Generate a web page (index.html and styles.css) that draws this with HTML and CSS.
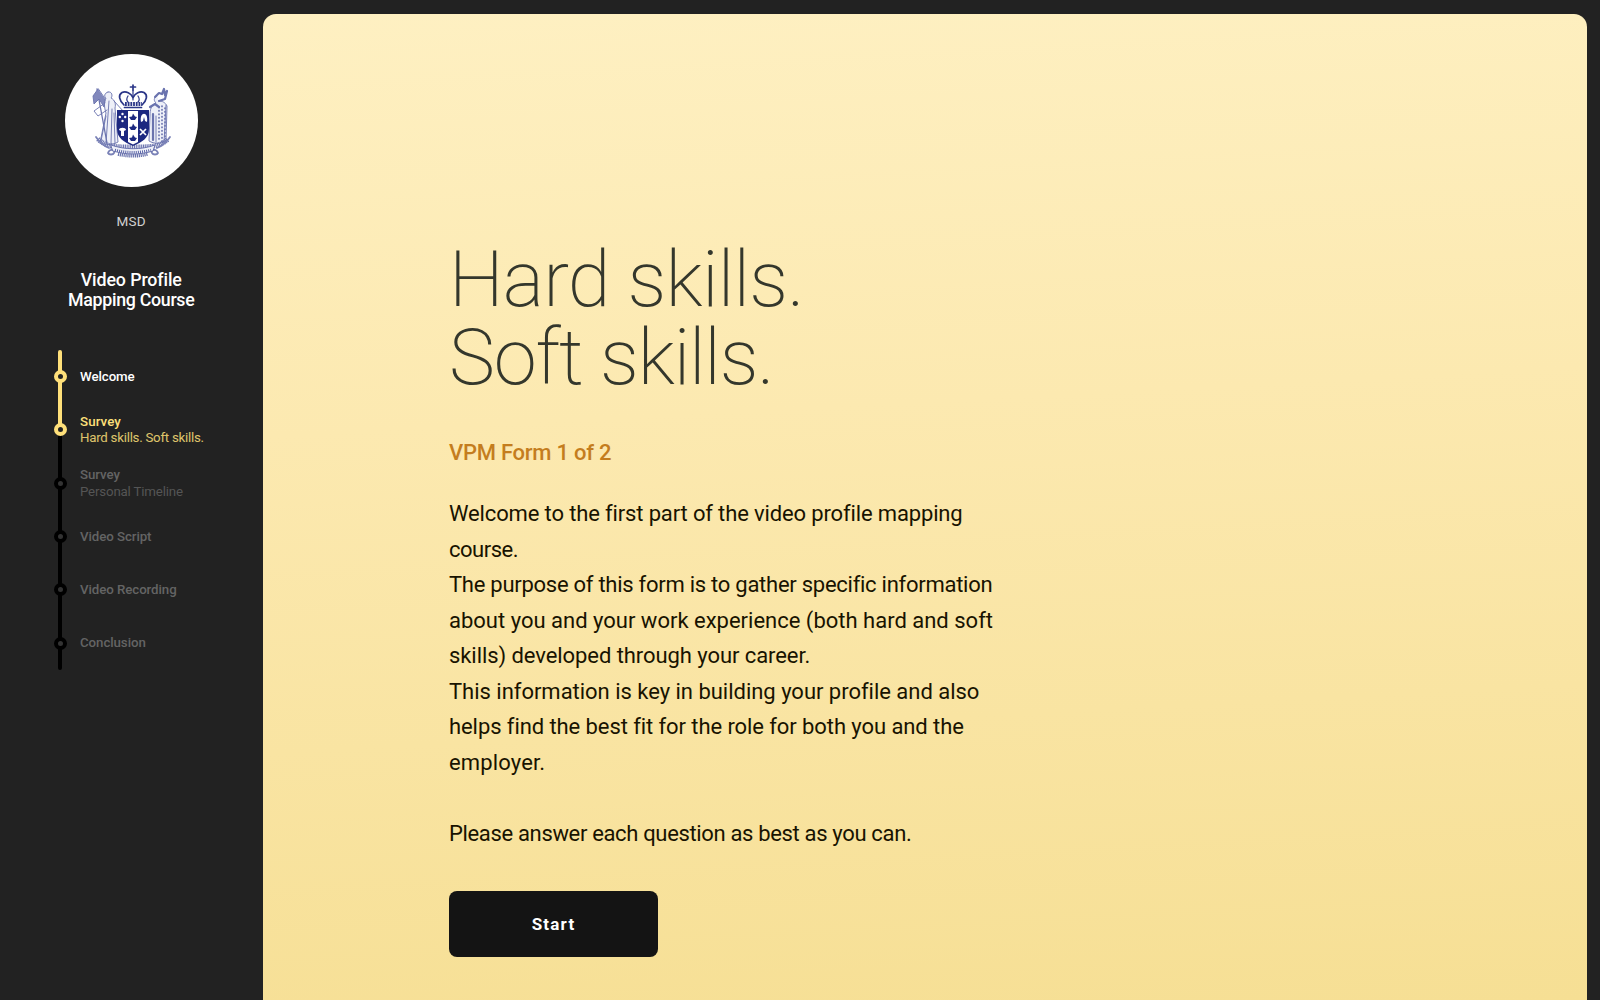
FILE: index.html
```html
<!DOCTYPE html>
<html lang="en">
<head>
<meta charset="utf-8">
<title>Video Profile Mapping Course</title>
<link rel="stylesheet" href="styles.css">
</head>
<body>
<div class="app">
  <aside class="sidebar">
    <div class="logo">
      <svg viewBox="88 78 86 82" width="86" height="82" aria-hidden="true">
        <g fill="none" stroke="#2b3688" stroke-linecap="round" stroke-linejoin="round">
          <!-- crown -->
          <path stroke-width="1.700" d="M133 84v6M130.500 86h5M124.500 106.500h17M124 104c-5-5-6-10-2-12.500 4-2 9 1 11 5 2-4 7-7 11-5 4 2.500 3 7.500-2 12.500"/>
          <path stroke-width="1.200" d="M133 91v8M128 95c-2 3-1 5 0 6M138 95c2 3 1 5 0 6"/>
          <path stroke-width="4" stroke-dasharray="1.800 .9" stroke-linecap="butt" d="M125 103h17"/>
          <!-- left supporter -->
          <g stroke="#6a73ae" stroke-width=".9">
            <path fill="#eef0f8" d="M108 91c4-1 5 4 3 6 4 2 5 6 4 10l3 34c-5 3-12 3-18 1l6-30c-2-6-2-11 0-15-2-1-2-5 2-6"/>
            <path d="M109 100l-3 42M112 108l-1 35M106 115l-5 25M114 112l1 30M114 100l10 11M105 102l-11 8 4 5 9-6"/>
            <path stroke-width="1.300" d="M97 88l10 54"/>
            <path fill="#8188bc" d="M98 88l-5 7 1 8 5-5 5 8 1-8z"/>
          </g>
          <!-- right supporter -->
          <g stroke="#6a73ae" stroke-width=".9">
            <path fill="#eef0f8" d="M157 95c-4 2-3 5-1 7-5 2-6 7-6 12l-1 26c5 3 12 3 17 0l1-35c-2-4-5-5-8-5"/>
            <path stroke-width="2.200" d="M155 96l4-4 3 1 2-5 1 6 2-4-2 8-6 2M150 106l5-3 4 3M153 113v26"/>
            <path d="M156 115v26M148 110l-7 3M166 104l-2 38"/>
            <path stroke-width="1.700" stroke-dasharray=".5 3" d="M159 106v34M162 105v36M165 107v30"/>
          </g>
          <!-- mantling and ribbon -->
          <path stroke="#6a73ae" stroke-width="5" stroke-dasharray="1.100 .7" stroke-linecap="butt" d="M98 138c8 8 17 8 35 8s27 0 35-8"/>
          <path stroke="#7a82b7" stroke-width="1.800" d="M96 136c4 6 8 9 13 11M170 136c-4 6-8 9-13 11M108 152c2-5 8-3 6 0-1 2-5 2-6 0zM158 152c-2-5-8-3-6 0 1 2 5 2 6 0z"/>
          <path fill="#eef0f8" stroke="#6a73ae" stroke-width="1" d="M111 144c14 5 30 5 44 0l-2 6c-13 4-27 4-40 0z"/>
          <path stroke="#4e58a0" stroke-width="2.500" stroke-dasharray=".9 1.200" stroke-linecap="butt" d="M115 149c12 3 24 3 36 0"/>
          <path stroke="#6a73ae" stroke-width="3.500" stroke-dasharray="1.200 .7" stroke-linecap="butt" d="M118 153c10 2.500 20 2.500 30 0"/>
        </g>
        <!-- shield -->
        <path fill="#1c2880" d="M117 109h32v19c0 9-7 13-16 17-9-4-16-8-16-17z"/>
        <path fill="#fff" d="M128 110h10v31l-5 2.500-5-2.500zM141 121c-2-11 8-11 6 0l-2-1-1-4-1 4zM119 129c0-3 7-3 7 0l-2 1v5h-3v-5z"/>
        <path fill="none" stroke="#fff" stroke-width="1.700" d="M140 128l6 6M146 128l-6 6"/>
        <g fill="#fff"><circle cx="122.500" cy="113" r="1.200"/><circle cx="119.800" cy="116" r="1.200"/><circle cx="125.200" cy="116" r="1.200"/><circle cx="122.500" cy="120" r="1.200"/></g>
        <g fill="#1c2880"><path d="M129 116l3-.5 1-3 2 3 2 .5-2 3h-4zM129 126l3-.5 1-3 2 3 2 .5-2 3h-4zM129 137l3-.5 1-3 2 3 2 .5-2 3h-4z"/></g>
      </svg>
    </div>
    <p class="org">MSD</p>
    <h2 class="course"><span class="course-a">Video Profile</span><span class="course-b">Mapping Course</span></h2>
    <ol class="steps">
      <li class="step done"><i class="dot"></i><div><b>Welcome</b></div></li>
      <li class="step current"><i class="dot"></i><div><b>Survey</b><small class="hard">Hard skills. Soft skills.</small></div></li>
      <li class="step"><i class="dot"></i><div><b>Survey</b><small>Personal Timeline</small></div></li>
      <li class="step"><i class="dot"></i><div><b>Video Script</b></div></li>
      <li class="step"><i class="dot"></i><div><b>Video Recording</b></div></li>
      <li class="step"><i class="dot"></i><div><b>Conclusion</b></div></li>
    </ol>
  </aside>
  <main class="panel">
    <h1 class="title"><span>Hard skills.</span><span class="title-b">Soft skills.</span></h1>
    <p class="form-no">VPM Form 1 of 2</p>
    <p class="copy">
      <span class="l1">Welcome to the first part of the video profile mapping</span>
      <span class="l2">course.</span>
      <span class="l3">The purpose of this form is to gather specific information</span>
      <span class="l4">about you and your work experience (both hard and soft</span>
      <span class="l5">skills) developed through your career.</span>
      <span class="l6">This information is key in building your profile and also</span>
      <span class="l7">helps find the best fit for the role for both you and the</span>
      <span class="l8">employer.</span>
    </p>
    <p class="copy ask"><span>Please answer each question as best as you can.</span></p>
    <button class="start" type="button">Start</button>
  </main>
</div>
</body>
</html>
```
FILE: styles.css
```css
* { box-sizing: border-box; }
body { margin: 0; background: #222; font-family: Roboto, sans-serif; overflow: hidden; }
p, h1, h2, ol { margin: 0; padding: 0; font-weight: 400; }
.app { display: flex; height: 1000px; padding: 13.5px 13.5px 0 0; }
.sidebar { width: 262.500px; flex: none; display: flex; flex-direction: column; align-items: center; padding-top: 40px; color: #fff; }
.logo { width: 133.500px; height: 133.500px; border-radius: 50%; background: #fff; display: flex; align-items: center; justify-content: center; flex: none; }
.org { margin-top: 26px; font-size: 13.500px; line-height: 16px; letter-spacing: .3px; color: #d0d0d0; }
.course { margin-top: 40.500px; font-size: 17.800px; line-height: 20px; font-weight: 500; display: flex; flex-direction: column; align-items: center; }
.course-a { letter-spacing: -.1px; }
.course-b { letter-spacing: -.3px; }
.steps { list-style: none; align-self: flex-start; margin: 40.500px 0 0 53.500px; display: flex; flex-direction: column; }
.step { height: 53.330px; display: flex; align-items: center; gap: 13.500px; position: relative; color: #646464; font-size: 13.300px; line-height: 16.670px; white-space: nowrap; }
.step > div { padding-top: 1px; }
.step::before { content: ""; position: absolute; left: 4.300px; top: 0; width: 4.600px; height: 100%; background: #000; }
.step:first-child::before { border-radius: 3px 3px 0 0; }
.step:last-child::before { border-radius: 0 0 3px 3px; }
.dot { position: relative; width: 13px; height: 13px; border: 4px solid #000; border-radius: 50%; background: #333; }
.step b, .step small { display: block; }
.step b { font-weight: 500; letter-spacing: -.08px; }
.step small { font-size: 13.300px; letter-spacing: -.18px; color: #555; }
.step .hard { letter-spacing: -.26px; }
.done { color: #fff; }
.done::before { background: #ffe07a; }
.current, .current small { color: #ffe07a; }
.current b { letter-spacing: .1px; }
.current small { opacity: .85; }
.current::before { background: linear-gradient(#ffe07a 50%, #000 50%); }
.done .dot, .current .dot { border-color: #ffe07a; background: #222; }
.panel { flex: 1; border-radius: 13px 13px 0 0; background: linear-gradient(177deg, #fef0c2, #fce9b0 40%, #f6df94); padding: 227.500px 0 0 186.500px; display: flex; flex-direction: column; align-items: flex-start; }
.title { font-size: 77.500px; line-height: 77.800px; font-weight: 200; color: #34372c; display: flex; flex-direction: column; letter-spacing: -.78px; }
.title-b { letter-spacing: -1.200px; }
.form-no { margin-top: 43.400px; font-size: 22px; line-height: 26px; font-weight: 500; letter-spacing: -.25px; color: #c47d1e; }
.copy { margin-top: 30px; font-size: 22px; line-height: 35.550px; color: #181300; display: flex; flex-direction: column; white-space: nowrap; }
.ask { margin-top: 35.500px; letter-spacing: -.34px; }
.l1 { letter-spacing: -.14px; }
.l2 { letter-spacing: -.5px; }
.l3 { letter-spacing: -.26px; }
.l5 { letter-spacing: -.07px; }
.l6 { letter-spacing: -.02px; }
.l7 { letter-spacing: -.08px; }
.l8 { letter-spacing: .15px; }
.start { margin-top: 39.500px; width: 209px; height: 66px; border: 0; border-radius: 8px; background: #141414; color: #fff; font: 700 17px Roboto, sans-serif; letter-spacing: 1.200px; }
```
